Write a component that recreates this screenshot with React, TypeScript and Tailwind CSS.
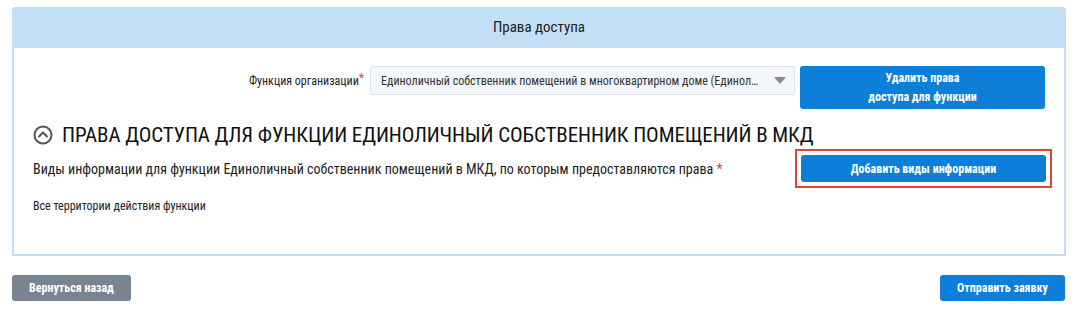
import React from 'react';

const font = { fontFamily: '"Roboto Condensed", "Liberation Sans Narrow", "Arial Narrow", Roboto, sans-serif' };

function ChevronCircle() {
    return (
        <svg width="20" height="20" viewBox="0 0 20 20" className="shrink-0">
            <circle cx="10" cy="10" r="8.5" fill="none" stroke="#555" strokeWidth="2" />
            <path d="M6 11.5 L10 7.5 L14 11.5" fill="none" stroke="#555" strokeWidth="2" strokeLinecap="round" strokeLinejoin="round" />
        </svg>
    );
}

export default function App() {
    return (
        <div className="w-[1075px] h-[314px] bg-white text-[#222] overflow-hidden" style={font}>
            <div className="pt-[7px] pl-[12px]">
                <div className="w-[1054px] border-2 border-t-0 border-[#c2dff5] rounded-t-[3px]">
                    <div className="h-[41px] bg-[#c2dff5] flex items-center justify-center text-[15px] text-[#222]">
                        Права доступа
                    </div>

                    <div className="px-[19px] pt-[18px] pb-[40px]">
                        <div className="flex items-start justify-end">
                            <div className="flex items-center h-[29px] text-[12px] mr-[6px]">
                                Функция организации<span className="text-[#d9453d] self-start mt-[3px]">*</span>
                            </div>
                            <div className="w-[425px] h-[29px] border border-[#dde3ea] bg-[#f3f6fa] rounded-[2px] flex items-center pl-[10px] pr-[8px] text-[12px] text-[#333]">
                                <span className="flex-1 truncate">Единоличный собственник помещений в многоквартирном доме (Единоличный собственник помещений в МКД)</span>
                                <span className="ml-[14px] w-0 h-0 border-l-[6px] border-r-[6px] border-t-[7px] border-l-transparent border-r-transparent border-t-[#888]" />
                            </div>
                            <button className="ml-[5px] w-[245px] h-[43px] bg-[#0e7fd9] rounded-[3px] text-white text-[12px] font-bold leading-[19px]">
                                Удалить права<br />доступа для функции
                            </button>
                        </div>

                        <div className="flex items-center gap-[9px] mt-[14px]">
                            <ChevronCircle />
                            <h2 className="text-[21px] leading-[24px] tracking-[-0.1px] text-[#111] uppercase">
                                Права доступа для функции Единоличный собственник помещений в МКД
                            </h2>
                        </div>

                        <div className="flex items-start justify-between mt-[2px]">
                            <div className="pt-[10px] text-[14px] text-[#222]">
                                Виды информации для функции Единоличный собственник помещений в МКД, по которым предоставляются права <span className="text-[#d9453d]">*</span>
                            </div>
                            <div className="border-2 border-[#e0433f] p-[4px] -mr-[7px]">
                                <button className="w-[245px] h-[27px] bg-[#0e7fd9] rounded-[3px] text-white text-[12px] font-bold">
                                    Добавить виды информации
                                </button>
                            </div>
                        </div>

                        <div className="mt-[10px] text-[12px] leading-[16px] text-[#222]">Все территории действия функции</div>
                    </div>
                </div>
            </div>

            <div className="flex justify-between items-center pl-[12px] pr-[10px] mt-[19px]">
                <button className="h-[26px] w-[119px] bg-[#788591] rounded-[3px] text-white text-[12px] font-bold">
                    Вернуться назад
                </button>
                <button className="h-[26px] w-[125px] bg-[#0e7fd9] rounded-[3px] text-white text-[12px] font-bold">
                    Отправить заявку
                </button>
            </div>
        </div>
    );
}
